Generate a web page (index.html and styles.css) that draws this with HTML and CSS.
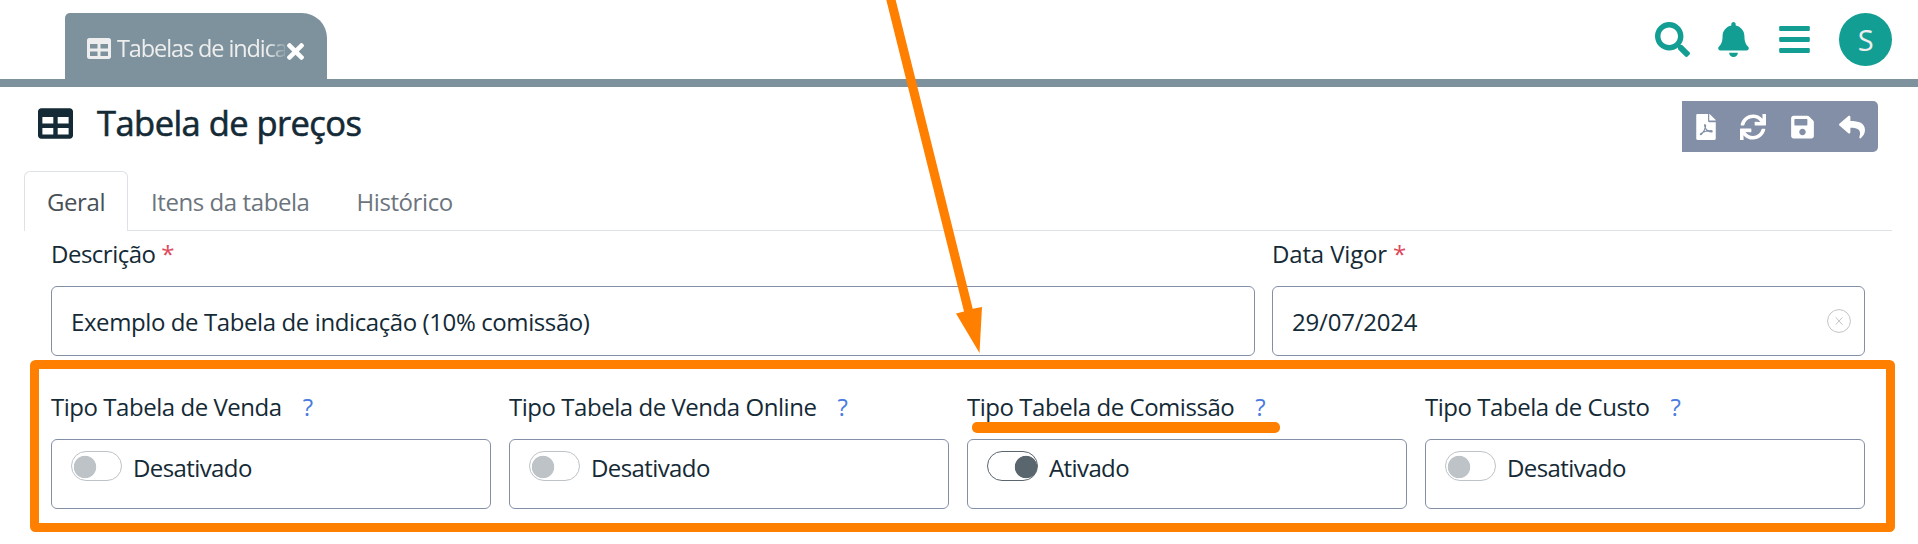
FILE: index.html
```html
<!DOCTYPE html>
<html lang="pt-BR">
<head>
<meta charset="utf-8">
<title>Tabela de preços</title>
<link rel="stylesheet" href="styles.css">
</head>
<body>
<svg width="0" height="0" class="defs">
  <symbol id="table" viewBox="0 32 512 448"><path d="M464 32H48C21.49 32 0 53.49 0 80v352c0 26.51 21.49 48 48 48h416c26.51 0 48-21.49 48-48V80c0-26.51-21.49-48-48-48zM224 416H64v-96h160v96zm0-160H64v-96h160v96zm224 160H288v-96h160v96zm0-160H288v-96h160v96z"/></symbol>
</svg>
<header class="topbar">
  <div class="window-tab">
    <svg class="tab-icon"><use href="#table"/></svg>
    <span class="tab-text">Tabelas de indica</span>
    <svg class="tab-close" viewBox="0 80 352 352"><path d="M242.72 256l100.07-100.07c12.28-12.28 12.28-32.19 0-44.48l-22.24-22.24c-12.28-12.28-32.19-12.28-44.48 0L176 189.28 75.93 89.21c-12.28-12.28-32.19-12.28-44.48 0L9.21 111.45c-12.28 12.28-12.28 32.19 0 44.48L109.28 256 9.21 356.07c-12.28 12.28-12.28 32.19 0 44.48l22.24 22.24c12.28 12.28 32.2 12.28 44.48 0L176 322.72l100.07 100.07c12.28 12.28 32.2 12.28 44.48 0l22.24-22.24c12.28-12.28 12.28-32.19 0-44.48L242.72 256z"/></svg>
  </div>
  <nav class="actions">
    <svg class="search" viewBox="0 0 512 512"><path d="M505 442.7L405.3 343c-4.5-4.5-10.6-7-17-7H372c27.6-35.3 44-79.7 44-128C416 93.1 322.9 0 208 0S0 93.1 0 208s93.1 208 208 208c48.3 0 92.7-16.4 128-44v16.3c0 6.4 2.5 12.5 7 17l99.7 99.7c9.4 9.4 24.6 9.4 33.9 0l28.3-28.3c9.4-9.4 9.4-24.6.1-34zM208 336c-70.7 0-128-57.2-128-128 0-70.7 57.2-128 128-128 70.7 0 128 57.2 128 128 0 70.7-57.2 128-128 128z"/></svg>
    <svg class="bell" viewBox="0 0 448 512"><path d="M224 512c35.32 0 63.97-28.65 63.97-64H160.03c0 35.35 28.65 64 63.97 64zm215.39-149.71c-19.32-20.76-55.47-51.99-55.47-154.29 0-77.7-54.48-139.9-127.94-155.16V32c0-17.67-14.32-32-31.98-32s-31.98 14.33-31.98 32v20.84C118.56 68.1 64.08 130.3 64.08 208c0 102.3-36.15 133.53-55.47 154.29-6 6.45-8.66 14.16-8.61 21.71.11 16.4 12.98 32 32.1 32h383.8c19.12 0 32-15.6 32.1-32 .05-7.55-2.61-15.27-8.61-21.71z"/></svg>
    <svg class="bars" viewBox="0 0 448 512"><rect y="60" width="448" height="72" rx="16"/><rect y="220" width="448" height="72" rx="16"/><rect y="380" width="448" height="72" rx="16"/></svg>
    <span class="avatar">S</span>
  </nav>
</header>

<main>
  <div class="heading">
    <svg class="heading-icon"><use href="#table"/></svg>
    <h1>Tabela de preços</h1>
    <div class="toolbar">
      <svg class="pdf" viewBox="0 0 384 512"><path d="M24 0H232V136c0 13 11 24 24 24H384V488c0 13-11 24-24 24H24c-13 0-24-11-24-24V24C0 11 11 0 24 0zM264 0l120 120v8H256V0z"/><path class="pdf-mark" d="M178 215c-14-22-18 2-8 36 22 72 70 96 124 100 32 2 26-24-4-24-70 0-132 14-190 50-34 22-20 44 6 18 38-36 70-100 78-150 2-14 0-24-6-30z"/></svg>
      <svg class="sync" viewBox="0 0 512 512"><path d="M440.65 12.57l4 82.77A247.16 247.16 0 0 0 255.83 8C134.73 8 33.91 94.92 12.29 209.82A12 12 0 0 0 24.09 224h49.05a12 12 0 0 0 11.67-9.26 175.91 175.91 0 0 1 317-56.94l-101.46-4.86a12 12 0 0 0-12.57 12v47.41a12 12 0 0 0 12 12H500a12 12 0 0 0 12-12V12a12 12 0 0 0-12-12h-47.37a12 12 0 0 0-11.98 12.57zM255.83 432a175.61 175.61 0 0 1-146-77.8l101.8 4.87a12 12 0 0 0 12.57-12v-47.4a12 12 0 0 0-12-12H12a12 12 0 0 0-12 12V500a12 12 0 0 0 12 12h47.35a12 12 0 0 0 12-12.6l-4.15-82.57A247.17 247.17 0 0 0 255.83 504c121.11 0 221.93-86.92 243.55-201.82a12 12 0 0 0-11.8-14.18h-49.05a12 12 0 0 0-11.67 9.26A175.86 175.86 0 0 1 255.83 432z"/></svg>
      <svg class="save" viewBox="0 0 448 512"><path d="M433.941 129.941l-83.882-83.882A48 48 0 0 0 316.118 32H48C21.49 32 0 53.49 0 80v352c0 26.51 21.49 48 48 48h352c26.51 0 48-21.49 48-48V163.882a48 48 0 0 0-14.059-33.941zM224 416c-35.346 0-64-28.654-64-64 0-35.346 28.654-64 64-64s64 28.654 64 64c0 35.346-28.654 64-64 64zm96-304.52V212c0 6.627-5.373 12-12 12H76c-6.627 0-12-5.373-12-12V108c0-6.627 5.373-12 12-12h228.52c3.183 0 6.235 1.264 8.485 3.515l3.48 3.48A11.996 11.996 0 0 1 320 111.48z"/></svg>
      <svg class="reply" viewBox="0 0 512 512"><path d="M8.309 189.836L184.313 37.851C199.719 24.546 224 35.347 224 56.015v80.053c160.629 1.839 288 34.032 288 186.258 0 61.441-39.581 122.309-83.333 154.132-13.653 9.931-33.111-2.533-28.077-18.631 45.344-145.012-21.507-183.51-176.59-185.742V360c0 20.7-24.3 31.453-39.687 18.164l-176.004-152c-11.071-9.562-11.086-26.753 0-36.328z"/></svg>
    </div>
  </div>

  <div class="tabs">
    <span class="tab active">Geral</span>
    <span class="tab">Itens da tabela</span>
    <span class="tab">Histórico</span>
  </div>

  <div class="row first">
    <div class="field wide">
      <label>Descrição <b>*</b></label>
      <div class="input">Exemplo de Tabela de indicação (10% comissão)</div>
    </div>
    <div class="field date">
      <label class="label-date">Data Vigor <b>*</b></label>
      <div class="input date-value"><span>29/07/2024</span><svg class="clear" viewBox="0 0 24 24"><circle cx="12" cy="12" r="11.4"/><path d="M8.8 8.4l6.6 7.2M15.4 8.4l-6.6 7.2"/></svg></div>
    </div>
  </div>

  <div class="row toggles">
    <div class="field">
      <label>Tipo Tabela de Venda<i>?</i></label>
      <div class="input toggle"><span class="switch"></span>Desativado</div>
    </div>
    <div class="field">
      <label>Tipo Tabela de Venda Online<i>?</i></label>
      <div class="input toggle"><span class="switch"></span>Desativado</div>
    </div>
    <div class="field">
      <label>Tipo Tabela de Comissão<i>?</i></label>
      <div class="input toggle"><span class="switch on"></span>Ativado</div>
    </div>
    <div class="field">
      <label>Tipo Tabela de Custo<i>?</i></label>
      <div class="input toggle"><span class="switch"></span>Desativado</div>
    </div>
  </div>
</main>

<svg class="annotations" viewBox="0 0 1918 544">
  <rect class="frame" x="34.5" y="364.5" width="1856" height="163" rx="1"/>
  <rect x="972" y="422" width="308" height="11" rx="5"/>
  <path d="M886.3 0h9.4l77 308.8 9.3-1.8-2.5 46-23.5-39.5 8-2z"/>
</svg>
</body>
</html>
```
FILE: styles.css
```css
* { box-sizing: border-box; }

body {
  margin: 0;
  height: 544px;
  overflow: hidden;
  background: #fff;
  color: #142a36;
  font: 24px/36px "Segoe UI", "Open Sans", "Noto Sans", sans-serif;
  letter-spacing: -0.4px;
  white-space: nowrap;
}

.defs { display: none; }
svg { display: block; flex: none; }

.topbar {
  display: flex;
  justify-content: space-between;
  align-items: flex-start;
  height: 87px;
  padding: 13px 26px 0 65px;
  border-bottom: 8px solid #7d929c;
}

.window-tab {
  display: flex;
  width: 262px;
  height: 66px;
  padding: 16px 22px 0;
  background: #7d929c;
  border-radius: 5px 25px 0 0;
  color: #eee;
}
.tab-icon { width: 24px; height: 21px; margin-top: 9px; fill: #eee; }
.tab-text {
  width: 168px;
  margin: 1px 0 0 6px;
  height: 36px;
  font-size: 23.5px;
  letter-spacing: -1.1px;
  -webkit-mask-image: linear-gradient(90deg, #000 150px, transparent 172px);
  mask-image: linear-gradient(90deg, #000 150px, transparent 172px);
}
.tab-close { width: 17px; height: 17px; margin: 14px 0 0 2px; fill: #fff; }

.actions { display: flex; fill: #139e94; }
.search { width: 35px; height: 35px; margin: 9px 28px 0 0; }
.bell { width: 31px; height: 35px; margin: 9px 30px 0 0; }
.bars { width: 31px; height: 35px; margin: 9px 29px 0 0; }
.avatar {
  width: 53px;
  height: 53px;
  border-radius: 50%;
  background: #139e94;
  color: #eee;
  font-size: 29px;
  line-height: 54px;
  text-align: center;
}

.heading {
  display: flex;
  height: 84px;
  padding: 14px 40px 0 38px;
}
.heading-icon { width: 35px; height: 31px; margin-top: 7px; fill: #142a36; }
h1 {
  margin: 0 auto 0 24px;
  font-size: 34.5px;
  font-weight: 500;
  line-height: 44px;
  letter-spacing: -0.55px;
  -webkit-text-stroke: 0.6px #142a36;
}
.toolbar {
  display: flex;
  width: 196px;
  height: 51px;
  padding: 13px 0 0 14px;
  background: #838fa6;
  border-radius: 0 5px 5px 0;
  fill: #fff;
}
.pdf { width: 20px; height: 26px; margin-right: 24px; }
.pdf-mark { fill: none; stroke: #838fa6; stroke-width: 22; }
.sync { width: 26px; height: 26px; margin-right: 25px; }
.save { width: 23px; height: 26px; margin-right: 25px; }
.reply { width: 26px; height: 26px; }

.tabs {
  display: flex;
  height: 60px;
  margin: 0 26px 0 24px;
  box-shadow: inset 0 -1px #dee2e6;
  color: #6c757d;
}
.tab {
  padding: 12px 23px 0 22px;
  border: 1px solid transparent;
  border-bottom: 0;
  letter-spacing: -0.42px;
}
.tab.active {
  width: 104px;
  border-color: #dee2e6;
  border-radius: 6px 6px 0 0;
  background: #fff;
  color: #495057;
}

.row { display: flex; margin-left: 51px; }
.first { gap: 17px; padding-top: 5px; }
.toggles { gap: 18px; padding-top: 33px; }
.field { width: 440px; }
.field.wide { width: 1204px; }
.field.date { width: 593px; }
label { display: block; height: 50px; letter-spacing: -0.5px; }
.label-date { letter-spacing: -0.15px; }
label b { color: #e0475a; font-weight: 400; }
label i { margin-left: 21px; color: #4a7be0; font-style: normal; }
.toggles label { letter-spacing: -0.46px; }
.input {
  height: 70px;
  padding: 17px 19px 0;
  border: 1px solid #838fa6;
  border-radius: 6px;
}
.date-value { display: flex; justify-content: space-between; padding-right: 13px; letter-spacing: -0.2px; }
.clear { width: 24px; height: 24px; margin-top: 5px; fill: none; stroke: #c4c4c4; }
.toggle { display: flex; padding-top: 11px; line-height: 34px; letter-spacing: -0.6px; }
.switch {
  width: 51px;
  height: 30px;
  margin-right: 11px;
  border: 1px solid #bdc3c7;
  border-radius: 15px;
  background: radial-gradient(circle at 13px 15px, #bdc3c7 10.8px, transparent 11.6px);
}
.switch.on {
  border-color: #5a666d;
  background: radial-gradient(circle at 38px 15px, #5a666d 10.8px, transparent 11.6px);
}

/* Callouts drawn above the form */
.annotations {
  position: absolute;
  inset: 0;
  width: 1918px;
  height: 544px;
  fill: #ff8000;
  pointer-events: none;
}
.frame { fill: none; stroke: #ff8000; stroke-width: 9; stroke-linejoin: round; }
```
